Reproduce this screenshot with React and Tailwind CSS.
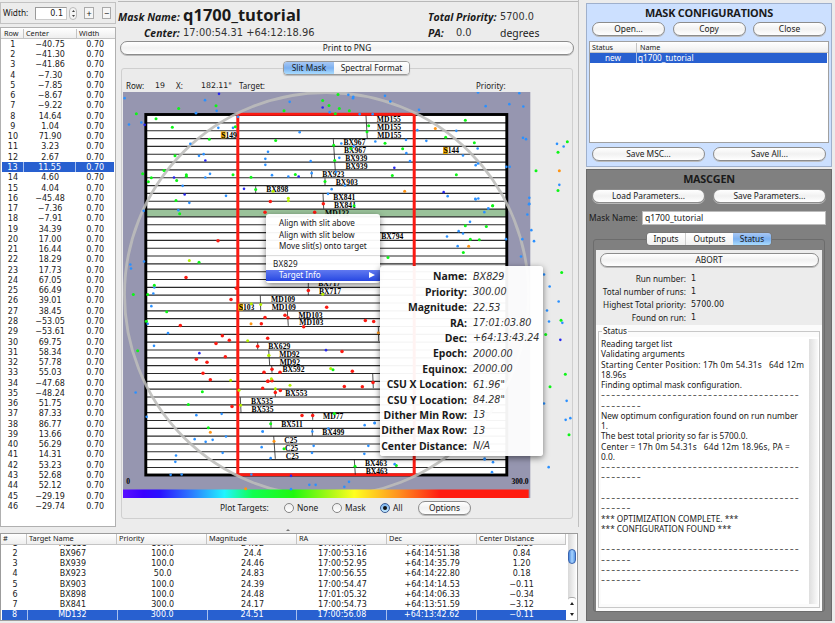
import React from "react";

const centers = "-40.75 -41.30 -41.86 -7.30 -7.85 -8.67 -9.22 14.64 1.04 71.90 3.23 2.67 11.55 4.60 4.04 -45.48 -7.36 -7.91 34.39 17.00 16.44 18.29 17.73 67.05 66.49 39.01 38.45 -53.05 -53.61 69.75 58.34 57.78 55.03 -47.68 -48.24 51.75 87.33 86.77 13.66 56.29 14.31 53.23 52.68 52.12 -29.19 -29.74".split(" ");

const targets = [
  ["1", "MD155", "100.0", "24.02", "17:00:44.26", "+64:15:00.26", "-1.39"],
  ["2", "BX967", "100.0", "24.4", "17:00:53.16", "+64:14:51.38", "0.84"],
  ["3", "BX939", "100.0", "24.46", "17:00:52.95", "+64:14:35.79", "1.20"],
  ["4", "BX923", "50.0", "24.83", "17:00:56.55", "+64:14:22.80", "0.18"],
  ["5", "BX903", "100.0", "24.39", "17:00:54.47", "+64:14:14.53", "-0.11"],
  ["6", "BX898", "100.0", "24.48", "17:01:05.32", "+64:14:06.33", "-0.34"],
  ["7", "BX841", "300.0", "24.17", "17:00:54.73", "+64:13:51.59", "-3.12"],
  ["8", "MD132", "300.0", "24.51", "17:00:56.08", "+64:13:42.62", "-0.11"],
];

const minus = (s) => s.replace(/^-/, "\u2212");

// Star positions are kept in thirds of a pixel, per tile: [originX, originY, {colour: "x,y x,y ..."}]
const BLUE = "#2a90ff", NAVY = "#2626f0", GREEN = "#0cf516", LIME = "#b4f000", ORANGE = "#ff9414", RED = "#fb1a12";
const tiles = [
  [0, 0, {
    [BLUE]: "374,296 615,302 650,334 588,341 387,375 424,369 655,385 699,385 571,433 597,469 611,464 630,523 616,534 548,559 568,610 678,589 804,457 796,478 796,496 816,527 714,352",
    [NAVY]: "657,283 434,376 616,483 522,534 554,585 732,568",
    [GREEN]: "536,327 648,319 409,343 468,358 517,383 706,382 628,419 525,469 492,513 428,523 454,535 445,547 559,526 559,530 530,543 699,526 753,533 767,570 827,423 528,603",
    [RED]: "811,606",
    [LIME]: "819,575",
  }],
  [280, 0, {
    [BLUE]: "29,307 205,286 220,292 219,296 315,289 331,306 417,331 149,338 239,344 278,344 594,279 718,281 617,320 688,314 730,321 59,398 412,392 529,394 439,424 378,421 286,426 379,461 390,485 92,485 178,475 184,432 222,440 593,447 549,468 587,497 594,492 679,502 689,502 729,415 738,419 831,433 851,441 838,556 25,531 95,521 168,517 155,569 144,583 195,558 503,590 586,598 595,597 748,595 748,613 625,627",
    [NAVY]: "128,324 343,505 56,531 491,578",
    [GREEN]: "174,285 128,303 147,318 178,327 208,334 12,334 166,343 556,362 266,379 261,397 497,413 583,430 315,431 368,448 161,437 212,447 164,483 46,525 337,528 135,546 529,526 862,427 834,458 768,514 834,573 638,619 222,619",
    [ORANGE]: "466,387 374,575 838,514",
    [LIME]: "25,596 25,604",
    [RED]: "130,613",
  }],
  [0, 200, {
    [BLUE]: "535,32 431,34 391,195 393,207 432,186 463,264 460,282 454,320 443,373 504,401 462,439 407,579",
    [NAVY]: "598,461",
    [GREEN]: "539,43 597,188 463,257 400,285 443,285 500,337 439,365 413,454 607,577 565,615",
    [LIME]: "568,183 754,313 782,315 743,424 692,542 717,572 722,617 807,467",
    [RED]: "654,124 795,38 558,234 709,266 693,300 795,354 784,373 541,378 667,409 688,422 648,432 803,416 773,440 676,472 589,479 621,488 609,521 631,541 792,518 803,545 788,566 696,621",
    [ORANGE]: "753,373",
  }],
  [230, 200, {
    [RED]: "254,38 235,273 290,323 165,347 174,355 221,382 406,363 431,366",
    [LIME]: "278,284",
    [GREEN]: "474,174",
    [ORANGE]: "445,400",
  }],
  [370, 200, {
    [BLUE]: "317,0 477,14 472,45 355,27 343,38 300,67 266,95 279,102 231,111 263,140 408,119 457,119 484,92 492,125 453,171 522,225 539,261 566,306 531,333 537,366 577,370 522,612 590,604 587,661 601,656 14,670 344,777",
    [NAVY]: "571,421",
    [GREEN]: "368,19 286,79 349,81 301,119 328,121 280,159 575,219 573,362 527,405 586,524 540,562 597,706",
    [ORANGE]: "296,140",
  }],
  [0, 400, {
    [BLUE]: "440,52 589,47 665,43 584,119 617,127 638,121 678,111 668,160 528,168 526,187 512,226 545,225 788,96 785,143 812,176 754,225",
    [GREEN]: "812,73 625,85",
    [ORANGE]: "631,98 822,125 737,268",
  }],
  [230, 340, {
    [RED]: "336,36 126,89 150,98 367,95 114,125 126,124 136,159 151,153 343,141 397,142 429,129 216,228 248,228",
    [NAVY]: "288,32 183,409",
    [LIME]: "116,48 302,87 124,118 180,137 136,148",
    [GREEN]: "309,91 313,222 375,380 499,378 162,328",
    [BLUE]: "434,251 404,257 295,267 98,276 247,276 251,319 415,319 246,340 403,343 494,374 238,436 257,436 357,427 343,442 183,449",
  }],
  [270, 450, { [BLUE]: "644,30 669,38 666,68 836,53" }],
];

const stars = tiles.flatMap(([ox, oy, groups]) =>
  Object.entries(groups).flatMap(([color, list]) =>
    list.split(" ").map((p) => {
      const [x, y] = p.split(",").map(Number);
      return { x: ox + x / 3, y: oy + y / 3, color, r: color === RED ? 1.75 : color === BLUE || color === NAVY ? 1.3 : 1.5 };
    })
  )
);

const slits = [
  [366, 116.3, 367.3, 139.3], [333.3, 139.7, 335.3, 171.3], [311.7, 171.7, 311.7, 178.3], [325, 178.7, 325, 185.7],
  [255.7, 186.7, 255.7, 193.7], [323, 194.3, 323.7, 209.3], [308.3, 283, 308.3, 295.7], [260.3, 296, 260.7, 311],
  [287.3, 311.3, 288.3, 326.3], [378.3, 326.7, 378.7, 341.7], [257.7, 342.7, 257.7, 350], [268.7, 350.7, 269.7, 366],
  [271.7, 366.3, 272, 373.3], [372.7, 374, 373.3, 388.7], [275.3, 389.3, 275.3, 397.3], [240.3, 397.7, 241, 412.7],
  [312.7, 413, 312.7, 420.3], [271, 421, 271, 428.3], [312.3, 428.7, 312.3, 436.3], [273.7, 436.7, 275.3, 459.3],
  [354.3, 460, 355.3, 475],
];

// [label, x, row]
const labels = [
  ["MD155", 376.8, 0], ["MD155", 377, 1], ["MD155", 377.3, 2], ["BX967", 343.5, 3], ["BX967", 344, 4],
  ["BX939", 345.3, 5], ["BX939", 345.5, 6], ["BX923", 322.3, 7], ["BX903", 335.8, 8], ["BX898", 266.3, 9],
  ["BX841", 333.3, 10], ["BX841", 334, 11], ["MD132", 325, 12], ["BX794", 381.3, 15], ["BX717", 318.3, 21],
  ["BX717", 319, 22], ["MD109", 271, 23], ["MD109", 271.7, 24], ["MD103", 298.5, 25], ["MD103", 299.3, 26],
  ["BX629", 268.3, 29], ["MD92", 279.3, 30], ["MD92", 279.7, 31], ["BX592", 282.5, 32], ["BX553", 285.3, 35],
  ["BX535", 251, 36], ["BX535", 251.5, 37], ["MD77", 323, 38], ["BX511", 281.2, 39], ["BX499", 322.3, 40],
  ["C25", 284.3, 41], ["C25", 285, 42], ["C25", 285.8, 43], ["BX463", 365, 44], ["BX463", 365.7, 45],
];
const guideStars = [["S149", 221.3, 2], ["S144", 443.5, 4], ["S103", 238.7, 24]];
const rowTop = (k) => 115.6 + 7.83 * k;

function MaskPlot() {
  return (
    <svg className="block h-[406px] w-[450px]" viewBox="123 92.5 450 406" fontFamily="Liberation Serif, serif" fontWeight="700" fontSize="7.6">
      <defs>
        <linearGradient id="spectrum">
          <stop offset="0" stopColor="#5a10ff" />
          <stop offset=".06" stopColor="#3a00ff" />
          <stop offset=".22" stopColor="#2038ff" />
          <stop offset=".25" stopColor="#18ffff" />
          <stop offset=".36" stopColor="#10ff18" />
          <stop offset=".47" stopColor="#28f010" />
          <stop offset=".57" stopColor="#ffff20" />
          <stop offset=".68" stopColor="#ff9020" />
          <stop offset=".78" stopColor="#ff1c10" />
          <stop offset="1" stopColor="#ff1c10" />
        </linearGradient>
        <linearGradient id="priorityScale">
          <stop offset="0" stopColor="#5a10ff" />
          <stop offset=".05" stopColor="#3a00ff" />
          <stop offset=".09" stopColor="#2a10ff" />
          <stop offset=".17" stopColor="#2c7cff" />
          <stop offset=".25" stopColor="#20f4ff" />
          <stop offset=".32" stopColor="#10ff50" />
          <stop offset=".42" stopColor="#20f810" />
          <stop offset=".52" stopColor="#b8f818" />
          <stop offset=".57" stopColor="#ffff20" />
          <stop offset=".68" stopColor="#ff9020" />
          <stop offset=".78" stopColor="#ff1c10" />
          <stop offset="1" stopColor="#ff1c10" />
        </linearGradient>
      </defs>
      <rect x="123" y="92" width="407.3" height="407" fill="#9696b0" />
      <rect x="145.7" y="115" width="361.3" height="361" fill="#fff" />
      <rect x="147" y={rowTop(12)} width="359" height="7.8" fill="#9ac29a" />
      {Array.from({ length: 45 }, (_, i) => (
        <line key={i} x1="147" x2="506" y1={rowTop(i + 1)} y2={rowTop(i + 1)} stroke="#2a2a2a" strokeWidth="1.15" />
      ))}
      <rect x="145.8" y="115" width="361" height="360.5" fill="none" stroke="#000" strokeWidth="2.9" />
      <rect x="237.8" y="114.8" width="176.4" height="360.4" fill="none" stroke="#fb1a12" strokeWidth="3" />
      <circle cx="326.5" cy="295" r="202" fill="none" stroke="#bdbdbb" strokeWidth="2.8" opacity=".88" />
      {slits.map(([x1, y1, x2, y2], i) => (
        <line key={i} x1={x1} y1={y1} x2={x2} y2={y2} stroke="#222" strokeWidth=".8" />
      ))}
      {guideStars.map(([t, x, k]) => (
        <g key={t}>
          <rect x={x - 0.5} y={rowTop(k) + 0.6} width="4.8" height="7" fill="#e8a800" />
          <text x={x} y={rowTop(k) + 6.8}>{t}</text>
        </g>
      ))}
      {labels.map(([t, x, k], i) => (
        <text key={i} x={x} y={rowTop(k) + 6.8}>{t}</text>
      ))}
      <rect x="123" y="490" width="405.7" height="9" fill="url(#priorityScale)" />
      <text x="126.3" y="484">0</text>
      <text x="511.5" y="484">300.0</text>
      {stars.map((s, i) => (
        <circle key={i} cx={s.x} cy={s.y} r={s.r} fill={s.color} />
      ))}
    </svg>
  );
}

const gloss = "border border-[#8c8c8c] bg-linear-to-b from-white via-[#f1f1f1] to-white shadow-[0_1px_0_#bbb]";

function Button({ className, children }) {
  return (
    <button className={`flex shrink-0 items-center justify-center rounded-full leading-none ${gloss} ${className}`}>{children}</button>
  );
}

function Radio({ on, children, className }) {
  return (
    <label className={`flex items-center gap-[3px] ${className}`}>
      <span className={`flex size-[10px] items-center justify-center rounded-full border ${on ? "border-[#3c5c94] bg-linear-to-b from-[#7db4ee] to-[#c4eaff]" : "border-[#858585] bg-linear-to-b from-[#eee] to-white"}`}>
        {on && <span className="size-[4px] rounded-full bg-[#111]" />}
      </span>
      {children}
    </label>
  );
}

const headCell = "flex items-center border-r border-[#c4c4c4] leading-none";

function ContextMenu() {
  return (
    <div className="absolute top-[214px] left-[266px] h-[69px] w-[114px] rounded-[3px] bg-white/95 pt-[3px] text-[8.1px] shadow-[0_2px_6px_rgba(0,0,0,0.5)]">
      <div className="h-[11.6px] pl-[13px] leading-[11.6px]">Align with slit above</div>
      <div className="h-[11.6px] pl-[13px] leading-[11.6px]">Align with slit below</div>
      <div className="h-[11.6px] pl-[13px] leading-[11.6px]">Move slit(s) onto target</div>
      <div className="mt-[3px] h-[3px] border-t border-[#ddd]" />
      <div className="h-[12px] pl-[7px] leading-[11px] tracking-[0.2px]">BX829</div>
      <div className="flex h-[11px] items-center justify-between bg-linear-to-b from-[#6078f0] to-[#2846e2] pr-[5px] pl-[13px] leading-none text-white">
        Target Info
        <svg className="h-[6px] w-[6px]" viewBox="0 0 6 6"><path d="M0 0L6 3L0 6Z" fill="#fff" /></svg>
      </div>
    </div>
  );
}

const info = [
  ["Name:", "BX829"], ["Priority:", "300.00"], ["Magnitude:", "22.53"], ["RA:", "17:01:03.80"], ["Dec:", "+64:13:43.24"],
  ["Epoch:", "2000.00"], ["Equinox:", "2000.00"], ["CSU X Location:", "61.96\""], ["CSU Y Location:", "84.28\""],
  ["Dither Min Row:", "13"], ["Dither Max Row:", "13"], ["Center Distance:", "N/A"],
];

function TargetInfo() {
  return (
    <div className="absolute top-[266px] left-[380px] h-[190px] w-[163px] rounded-[3px] bg-white/95 pt-[3px] shadow-[0_2px_6px_rgba(0,0,0,0.5)]">
      {info.map(([k, v]) => (
        <div key={k} className="flex h-[15.4px] items-center leading-none whitespace-nowrap">
          <span className="flex w-[87px] justify-end font-['Open_Sans'] text-[10.4px] font-bold">{k}</span>
          <span className="ml-[6px] font-['DejaVu_Sans'] text-[9.6px] text-[#333] italic">{v}</span>
        </div>
      ))}
    </div>
  );
}

const longRule = "-".repeat(39);
const log = [
  "Reading target list", "Validating arguments", "Starting Center Position: 17h 0m 54.31s   64d 12m", "18.96s",
  "Finding optimal mask configuration.", longRule, "--------", "New optimum configuration found on run number", "1.",
  "The best total priority so far is 5700.0.", "Center = 17h 0m 54.31s   64d 12m 18.96s, PA =", "0.0.", longRule, "--------", "",
  longRule, "------", "*** OPTIMIZATION COMPLETE. ***", "*** CONFIGURATION FOUND ***", "", longRule, "------", longRule, "--------",
];

function LogLine({ text }) {
  if (text.startsWith("--")) {
    return <div className="h-[10.27px] overflow-hidden font-['DejaVu_Sans'] text-[11px] leading-[10.27px] tracking-[1.13px] whitespace-pre text-[#555]">{text}</div>;
  }
  const spaced = /\d+h /.test(text);
  return <div className={`h-[10.27px] leading-[10.27px] whitespace-pre ${spaced ? "tracking-[0.18px]" : ""}`}>{text}</div>;
}

function SlitList() {
  return (
    <div className="flex w-[116px] flex-col pt-[2px]">
      <div className="flex h-[22px] items-center border border-[#c2c2c2] pl-[2px] leading-none">
        <span className="w-[32px] text-[8.3px]">Width:</span>
        <span className="flex h-[13px] w-[32px] items-center justify-end border border-[#999] border-r-[#ccc] border-b-[#ccc] bg-white pt-[1px] pr-[3px] font-['DejaVu_Sans'] text-[8px]">0.1</span>
        <span className="ml-[2px] flex h-[13px] w-[8px] flex-col items-center justify-center gap-[3px] rounded-[4px] border border-[#bbb] bg-[#f4f4f4]">
          <svg className="h-[2px] w-[3px]" viewBox="0 0 3 2"><path d="M1.5 0L3 2H0Z" fill="#444" /></svg>
          <svg className="h-[2px] w-[3px]" viewBox="0 0 3 2"><path d="M1.5 2L3 0H0Z" fill="#444" /></svg>
        </span>
        <span className="ml-[7px] flex h-[12px] w-[10px] items-center justify-center border border-[#aaa] bg-[#f6f6f6] text-[9px]">+</span>
        <span className="ml-[8px] flex h-[12px] w-[9px] items-center justify-center border border-[#aaa] bg-[#f6f6f6] text-[9px]">−</span>
      </div>
      <div className="mt-[3px] h-[500px] border border-[#b0b0b0] bg-white">
        <div className="flex h-[11px] border-b border-[#c4c4c4] bg-linear-to-b from-white to-[#eee] pt-[1px] text-[7.3px]">
          <span className={`w-[23px] pl-[3px] ${headCell}`}>Row</span>
          <span className={`w-[53px] pl-[2px] ${headCell}`}>Center</span>
          <span className="flex items-center pl-[2px] leading-none">Width</span>
        </div>
        {centers.map((c, i) => (
          <div key={i} className={`mr-px ml-[1px] flex h-[10.27px] items-center font-['DejaVu_Sans'] text-[8px] leading-none ${i === 12 ? "bg-[#2860d0] text-white" : "text-[#222]"}`}>
            <span className={`flex h-full w-[22px] items-center justify-center pt-[1.4px] ${i === 12 ? "border-r border-[#a8c0ee]" : ""}`}>{i + 1}</span>
            <span className={`flex h-full w-[53px] items-center justify-center pt-[1.4px] ${i === 12 ? "border-r border-[#a8c0ee]" : ""}`}>{minus(c)}</span>
            <span className="flex w-[38px] justify-center pt-[1.4px]">0.70</span>
          </div>
        ))}
      </div>
    </div>
  );
}

function MaskPanel() {
  return (
    <div className="flex w-[463px] flex-col border-r border-[#c0c0c0] pt-[1px] pl-[2px]">
      <div className="flex h-[40px] flex-col border-t border-[#b8b8b8]">
        <div className="flex h-[25px] items-center pt-[1px] leading-none whitespace-nowrap">
          <span className="w-[65px] pt-[4px] font-['Open_Sans'] text-[10.5px] font-bold italic">Mask Name:</span>
          <span className="w-[245px] font-['Open_Sans'] text-[16.5px] font-bold">q1700_tutorial</span>
          <span className="w-[72px] pt-[4px] font-['Open_Sans'] text-[10.5px] font-bold italic">Total Priority:</span>
          <span className="pt-[4px] font-['DejaVu_Sans'] text-[9.7px] text-[#333]">5700.0</span>
        </div>
        <div className="flex h-[12px] items-center pl-[26px] leading-none whitespace-nowrap">
          <span className="w-[39px] font-['Open_Sans'] text-[10.4px] font-bold italic">Center:</span>
          <span className="w-[245px] font-['DejaVu_Sans'] text-[9.9px] text-[#333]">17:00:54.31 +64:12:18.96</span>
          <span className="w-[28px] font-['Open_Sans'] text-[10.4px] font-bold italic">PA:</span>
          <span className="w-[44px] font-['DejaVu_Sans'] text-[9.8px] text-[#333]">0.0</span>
          <span className="text-[10.4px] text-[#222]">degrees</span>
        </div>
      </div>
      <Button className="ml-[2px] h-[14px] w-[454px] text-[8.3px]">Print to PNG</Button>
      <div className="mt-[13px] ml-[3px] h-[451px] w-[452px] rounded-[3px] border border-[#cfcfcf] bg-[#ebebeb]">
        <div className="-mt-[8px] ml-[161px] flex h-[14px] w-[127px] overflow-hidden rounded-[4px] border border-[#999] text-[8.3px] leading-none shadow-[0_1px_1px_#bbb]">
          <span className="flex w-[50px] items-center justify-center bg-linear-to-b from-[#a8c8f4] via-[#7cb0f0] to-[#a8dcff]">Slit Mask</span>
          <span className="flex flex-1 items-center justify-center bg-linear-to-b from-white to-[#f0f0f0]">Spectral Format</span>
        </div>
        <div className="flex h-[17px] items-center pt-[5px] pl-[4px] text-[8px] leading-none">
          <span className="w-[29px]">Row:</span>
          <span className="w-[21px] font-['DejaVu_Sans'] text-[7.8px]">19</span>
          <span className="w-[25px]">X:</span>
          <span className="w-[38px] font-['DejaVu_Sans'] text-[7.8px]">182.11"</span>
          <span className="w-[237px]">Target:</span>
          <span>Priority:</span>
        </div>
        <div className="pl-[1px]">
          <MaskPlot />
        </div>
        <div className="flex h-[20px] items-center pl-[98px] text-[8.4px] leading-none">
          <span className="w-[64px]">Plot Targets:</span>
          <Radio className="w-[48px]">None</Radio>
          <Radio className="w-[48px]">Mask</Radio>
          <Radio className="w-[38px]" on>All</Radio>
          <Button className="h-[14px] w-[53px]">Options</Button>
        </div>
      </div>
    </div>
  );
}

const cols = ["w-[26px]", "w-[90px]", "w-[90px]", "w-[90px]", "w-[90px]", "w-[90px]", "w-[89px]"];

function TargetTable() {
  return (
    <div className="flex h-[88px] w-[578px] border border-[#9c9c9c] bg-white">
      <div className="w-[565px]">
        <div className="flex h-[11px] border-b border-[#c4c4c4] bg-linear-to-b from-white to-[#eee] text-[7.4px]">
          {["#", "Target Name", "Priority", "Magnitude", "RA", "Dec", "Center Distance"].map((h, i) => (
            <span key={h} className={`pl-[2px] ${headCell} ${cols[i]}`}>{h}</span>
          ))}
        </div>
        <div className="flex h-[75px] flex-col justify-end overflow-hidden">
          {targets.map((t, n) => (
            <div key={n} className={`ml-px flex h-[10.27px] shrink-0 items-center font-['DejaVu_Sans'] text-[8px] leading-none ${n === 7 ? "bg-[#2860d0] text-white" : "text-[#222]"}`}>
              {t.map((v, i) => (
                <span key={i} className={`flex h-full items-center justify-center pt-[1px] ${cols[i]} ${n === 7 && i < 6 ? "border-r border-[#a8c0ee]" : ""}`}>{minus(v)}</span>
              ))}
            </div>
          ))}
        </div>
      </div>
      <div className="ml-[2px] flex w-[8px] flex-col items-center bg-linear-to-r from-[#d8d8d8] to-[#fafafa] pt-[15px]">
        <div className="h-[15px] w-[8px] rounded-full border border-[#3a64b0] bg-linear-to-r from-[#4a88dc] via-[#a8d4ff] to-[#5a98e4]" />
        <div className="mt-[33px] flex flex-1 flex-col items-center justify-around self-stretch rounded-t-[3px] border-t border-[#aaa] bg-white">
          <svg className="h-[3px] w-[4px]" viewBox="0 0 4 3"><path d="M2 0L4 3H0Z" fill="#222" /></svg>
          <svg className="h-[3px] w-[4px]" viewBox="0 0 4 3"><path d="M2 3L4 0H0Z" fill="#222" /></svg>
        </div>
      </div>
    </div>
  );
}

function Configurations() {
  return (
    <div className="h-[164px] border border-[#9fb0cc] bg-[#cce0ff] px-[2px]">
      <div className="flex h-[18px] items-center justify-center font-['Open_Sans'] text-[10.9px] leading-none font-bold tracking-[-0.22px]">MASK CONFIGURATIONS</div>
      <div className="flex justify-between px-[3px] text-[8.4px]">
        <Button className="h-[14px] w-[73px]">Open...</Button>
        <Button className="h-[14px] w-[73px]">Copy</Button>
        <Button className="h-[14px] w-[73px]">Close</Button>
      </div>
      <div className="mt-[5px] h-[102px] border border-[#a0a0a0] bg-white">
        <div className="flex h-[11px] border-b border-[#c4c4c4] bg-linear-to-b from-white to-[#eee] pt-[1px] text-[7.2px]">
          <span className={`w-[47px] pl-[2px] ${headCell}`}>Status</span>
          <span className="flex items-center pl-[3px] leading-none">Name</span>
        </div>
        <div className="mr-px flex h-[10px] items-center bg-[#2860d0] text-[8.2px] leading-none text-white">
          <span className="flex h-full w-[47px] items-center justify-center border-r border-[#a8c0ee]">new</span>
          <span className="pl-[1px]">q1700_tutorial</span>
        </div>
      </div>
      <div className="mt-[4px] flex justify-between px-[3px] text-[8.4px]">
        <Button className="h-[14px] w-[113px]">Save MSC...</Button>
        <Button className="h-[14px] w-[113px]">Save All...</Button>
      </div>
    </div>
  );
}

function Mascgen() {
  return (
    <div className="mt-[2px] h-[452px] border border-[#6a6a6a] bg-[#808080]">
      <div className="flex h-[19px] items-center justify-center font-['Open_Sans'] text-[10.8px] leading-none font-bold tracking-[-0.2px]">MASCGEN</div>
      <div className="flex justify-between px-[5px] text-[8.3px]">
        <Button className="h-[14px] w-[113px]">Load Parameters...</Button>
        <Button className="h-[14px] w-[113px]">Save Parameters...</Button>
      </div>
      <div className="mt-[8px] flex h-[14px] items-center pl-[2px] text-[8.4px] leading-none">
        <span className="w-[53px]">Mask Name:</span>
        <span className="flex h-[14px] w-[184px] items-center border border-[#bbb] bg-white pl-[2px] text-[8.6px]">q1700_tutorial</span>
      </div>
      <div className="mt-[14px] ml-[6px] h-[373px] w-[232px] rounded-[3px] border border-[#6c6c6c] px-[2px]">
        <div className="-mt-[8px] ml-[50px] flex h-[14px] w-[126px] overflow-hidden rounded-[4px] border border-[#777] text-[8.3px] leading-none">
          <span className="flex w-[39px] items-center justify-center border-r border-[#ccc] bg-linear-to-b from-white to-[#f0f0f0]">Inputs</span>
          <span className="flex w-[47px] items-center justify-center bg-linear-to-b from-white to-[#f0f0f0]">Outputs</span>
          <span className="flex flex-1 items-center justify-center bg-linear-to-b from-[#a8c8f4] via-[#7cb0f0] to-[#a8dcff]">Status</span>
        </div>
        <div className="mt-[4px] h-[361px] bg-[#fbfbfb]">
          <div className="h-[75px] bg-[#ececec] pt-[3px]">
            <Button className="mx-auto h-[14px] w-[219px] text-[8.4px]">ABORT</Button>
            <div className="pt-[6px] text-[8.2px] leading-none">
              {[["Run number:", "1"], ["Total number of runs:", "1"], ["Highest Total priority:", "5700.00"], ["Found on run:", "1"]].map(([k, v]) => (
                <div key={k} className="flex h-[12.8px] items-center whitespace-nowrap">
                  <span className="flex w-[90px] justify-end">{k}</span>
                  <span className="pl-[5px] font-['DejaVu_Sans'] text-[8px]">{v}</span>
                </div>
              ))}
            </div>
          </div>
          <fieldset className="mx-[2px] h-[283px] border border-[#c8c8c8] pl-[2px]">
            <legend className="ml-[1px] px-[1px] text-[8.2px] leading-[12px]">Status</legend>
            <div className="flex h-[267px] bg-white pt-[2px]">
              <div className="w-[208px] text-[8.3px]">
                {log.map((l, i) => (
                  <LogLine key={i} text={l} />
                ))}
              </div>
              <div className="w-[9px] bg-linear-to-r from-[#dedede] to-[#fafafa]" />
            </div>
          </fieldset>
        </div>
      </div>
    </div>
  );
}

export default function App() {
  return (
    <div className="relative flex h-[623px] w-[835px] overflow-hidden bg-[#ececec] font-['Noto_Sans',sans-serif] text-[#1a1a1a]">
      <div className="w-[580px]">
        <div className="flex h-[527px]">
          <SlitList />
          <MaskPanel />
        </div>
        <div className="flex h-[6px] items-center pl-[286px]">
          <svg className="h-[3px] w-[4px]" viewBox="0 0 4 3"><path d="M2 0L4 2H0Z" fill="#777" /></svg>
        </div>
        <TargetTable />
      </div>
      <div className="ml-[6px] w-[246px] pt-[3px]">
        <Configurations />
        <Mascgen />
      </div>
      <ContextMenu />
      <TargetInfo />
    </div>
  );
}
